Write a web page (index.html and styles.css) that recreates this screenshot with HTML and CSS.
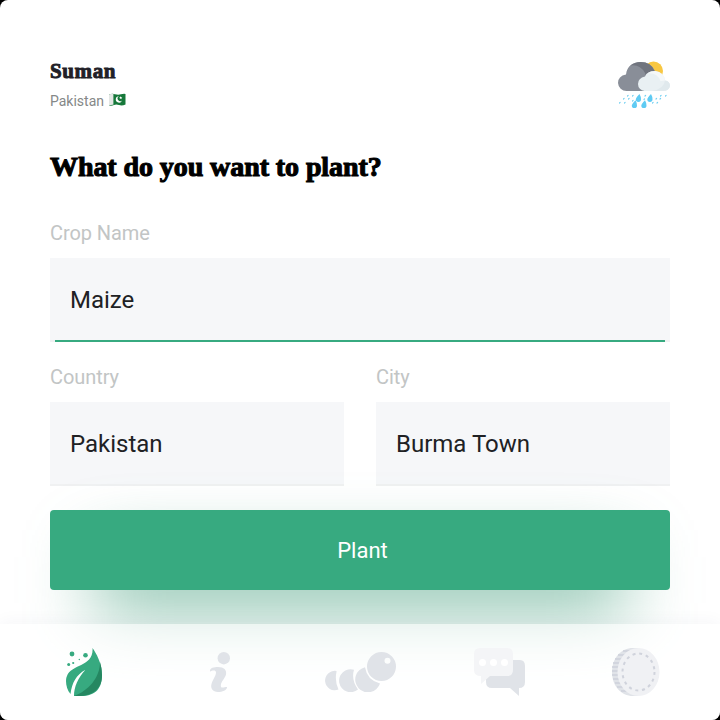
FILE: index.html
```html
<!DOCTYPE html>
<html lang="en">
<head>
<meta charset="utf-8">
<title>Plant</title>
<link rel="stylesheet" href="styles.css">
</head>
<body>
<div class="screen">
  <main class="content">
    <header class="header">
      <div>
        <div class="name">Suman</div>
        <div class="place">Pakistan
          <svg class="flag" width="17" height="14" viewBox="0 0 17 14"><path d="M0 1.7Q3 .3 6 1.2T12 1.3T16.500 1V11.500Q13 13 10 12T5 12T0 12.500Z" fill="#16783a"/><path d="M0 1.700Q2 .6 4.400 .9V11.800Q2 11.700 0 12.500Z" fill="#e4e7e5"/><path d="M10 3.200A3.200 3.200 0 1 0 13 7.400A2.600 2.600 0 1 1 10 3.200Z" fill="#fff"/><path d="M11.700 3.200l.5 1 1.100.1-.8.8.2 1.100-1-.6-1 .6.3-1.200-.8-.8 1.100-.1z" fill="#fff"/></svg>
        </div>
      </div>
      <svg class="weather" width="52" height="48" viewBox="0 0 52 48">
        <circle cx="35.500" cy="10" r="9.500" fill="#f8c742"/>
        <path d="M8.500 30A8.500 8.500 0 0 1 0 22Q0 15 8 13.500C9 5 15 1 22.500 1Q33 1 37 10L40 30Z" fill="#898e98"/>
        <path d="M12.500 4.500Q17 1 22.500 1Q33 1 36.500 10L29 17L27 12Q22 3 12.500 4.500Z" fill="#70747e"/>
        <path d="M26.500 30A7 7 0 0 1 20 23Q20 17 27 15.500Q29 10 37 10Q46 11 47 19.500Q52 20 52 25Q51 30 45 30Z" fill="#e9f0f3"/>
        <path d="M29 12.500Q32 10 37 10Q46 11 47 19.500L42.500 20Q39 11 29 12.500Z" fill="#f5f8f9"/>
        <path d="M47 19.500Q52 20 52 25Q51 30 45 30H34Q46 28 47 19.500Z" fill="#e0e9ed"/>
        <g fill="#5fcbf3">
          <path id="drop" d="M21.500 33Q17.800 37 17.800 38.300A2.600 2.600 0 0 0 23 38.300Q23.200 36 21.500 33Z"/>
          <use href="#drop" x="11.500"/><use href="#drop" x="-4" y="6.200"/><use href="#drop" x="5.500" y="6.200"/>
        </g>
        <g class="drizzle"><path d="M9.500 35l.6-.6M14.500 35l.6-.6M5.500 38l.6-.6M10.500 38l.6-.6M1.500 42l.6-.6M6.500 42l.6-.6M14.500 40l.6-.6M27 35l.6-.6M26 38.500l.6-.6M38 38l.6-.6M42.500 35l.6-.6M47.500 35l.6-.6M42 38l.6-.6M34.500 42l.6-.6M39 42l.6-.6"/></g>
      </svg>
    </header>
    <h1 class="title">What do you want to plant?</h1>
    <div class="field">
      <div class="label">Crop Name</div>
      <div class="input active">Maize</div>
    </div>
    <div class="row">
      <div class="field"><div class="label">Country</div><div class="input">Pakistan</div></div>
      <div class="field"><div class="label">City</div><div class="input">Burma Town</div></div>
    </div>
    <div class="action"><button class="plant">Plant</button></div>
  </main>
  <nav class="nav">
    <div class="tab">
      <svg width="36" height="48" viewBox="0 0 36 48">
        <path d="M26.500 0C30 5 36 15 36 27C36 40 30 48 15 48H8C8 39 12 30 19.500 21.800C10 27 6 35 4.500 46C0 41-1 32 1 28C5 16 28 19 26.500 0Z" fill="#37aa80"/>
        <path d="M34 14Q36 20 36 27C36 41 27 48 12 48H8C22 43 34 30 34 14Z" fill="#258761"/>
        <g fill="#37aa80"><circle cx="6" cy="6" r="2.400"/><circle cx="19.500" cy="7.300" r="2.300"/><circle cx="13.300" cy="11.500" r=".7"/><circle cx="7.200" cy="15" r="1.100"/><circle cx="2.700" cy="16.400" r="1.500"/></g>
      </svg>
    </div>
    <div class="tab tab-info">
      <svg width="20" height="40" viewBox="0 0 20 40" fill="#e0e3e8"><circle cx="13.800" cy="6.200" r="6.200"/><path d="M0 18.500C0 16 4 15 8 15C14 15 17 18 16 22.500C15 26.500 11 29.500 10.800 33.500C10.700 37 14 35 17 35C17.500 38 12 40 8 40C2.500 40 .3 36 1.500 32C2.500 28 6 24 6 20.500C6 17.500 2 18.500 0 19.500Z"/></svg>
    </div>
    <div class="tab">
      <svg width="72" height="40" viewBox="0 0 72 40" fill="#e0e3e8">
        <path d="M12.500 20Q10.500 28.500 14.500 37.500A9.700 9.700 0 1 1 12.500 19Z"/>
        <path d="M30 17.800Q27 28 34 37.500A11.500 11.500 0 1 1 30 17.700Z"/>
        <path d="M41 15.200Q43 28 56 31.500A12.700 12.700 0 1 1 41 15.200Z"/>
        <path fill-rule="evenodd" d="M57.500 0A14.500 14.500 0 1 1 57.500 29A14.500 14.500 0 1 1 57.500 0ZM63.500 5.800A3 3 0 1 0 63.500 11.800A3 3 0 1 0 63.500 5.800Z"/>
      </svg>
    </div>
    <div class="tab tab-chat">
      <svg width="52" height="48" viewBox="0 0 52 48">
        <path d="M18 12H46Q51 12 51 18V34Q51 40 45 40V48L36 40H18Q12 40 12 34V27Z" fill="#e0e3e8"/>
        <path d="M6 0H33Q39 0 39 6V22Q39 28 33 28H16L7 36V28Q0 28 0 22V6Q0 0 6 0Z" fill="#f4f5f7"/>
        <g fill="#fff"><circle cx="8.500" cy="14.500" r="3.500"/><circle cx="19.500" cy="14.500" r="3.500"/><circle cx="30.500" cy="14.500" r="3.500"/></g>
      </svg>
    </div>
    <div class="tab">
      <svg width="48" height="48" viewBox="0 0 48 48">
        <path d="M21 0H27V48H21C9 48 0 38 0 24S9 0 21 0Z" fill="#e0e3e8"/>
        <path d="M0 19H9M0 23H9M0 27H9M1 31H10M3 35H11M5 39H13M9 43H16M1 15H10M3 11H11M6 7H13M11 3H18" fill="none" stroke="#cdd1da" stroke-width="1.600"/>
        <ellipse cx="26.500" cy="24" rx="21" ry="24" fill="#f0f1f4"/>
        <ellipse cx="26.500" cy="24" rx="16" ry="18.500" fill="none" stroke="#d0d3dc" stroke-width="2" stroke-dasharray="3 3.800"/>
      </svg>
    </div>
  </nav>
</div>
</body>
</html>
```
FILE: styles.css
```css
* { box-sizing: border-box; }
body { margin: 0; background: #000; font-family: Roboto, "Liberation Sans", sans-serif; }
.screen { width: 720px; height: 720px; background: #fff; border-radius: 8px; overflow: hidden; display: flex; flex-direction: column; }
.content { height: 624px; padding: 58px 50px 0; }
.header { height: 92px; display: flex; justify-content: space-between; }
.name { height: 26px; font: bold 21px/26px "Liberation Serif", serif; letter-spacing: .6px; color: #212027; -webkit-text-stroke: .9px #212027; }
.place { display: flex; align-items: center; gap: 4.500px; margin-top: 8px; font-size: 14px; line-height: 18px; color: #858888; }
.flag { margin-top: -2px; }
.weather { margin-top: 3px; overflow: visible; }
.drizzle { fill: none; stroke: #76d1f2; stroke-width: 1.2; stroke-linecap: round; }
.title { margin: 0; height: 71px; font: bold 28px/33px "Liberation Serif", serif; letter-spacing: -.08px; color: #000; -webkit-text-stroke: 1.1px #000; white-space: nowrap; }
.field { flex: 1; }
.label { height: 24px; margin-bottom: 13px; font-size: 20px; line-height: 24px; letter-spacing: -.08px; color: #c2c5c5; }
.input { position: relative; height: 84px; padding-left: 20px; background: #f6f7f9; border-bottom: 2px solid #f0f1f2; font-size: 24px; line-height: 84px; color: #202124; }
.active::after { content: ""; position: absolute; left: 5px; right: 5px; bottom: -2px; height: 2px; background: #37aa80; }
.row { display: flex; gap: 32px; margin-top: 23px; }
.action { position: relative; z-index: 0; margin-top: 24px; }
.action::before { content: ""; position: absolute; z-index: -1; top: 42px; left: 44px; right: 44px; height: 56px; background: rgba(55, 150, 115, .66); filter: blur(34px); }
.plant { display: block; width: 100%; height: 80px; border: 0; border-radius: 4px; background: #37aa80; color: #fff; font: 22px Roboto, sans-serif; padding: 0 0 0 5px; }
.nav { position: relative; z-index: 1; height: 96px; padding: 0 15px; display: grid; grid-template-columns: repeat(5, 1fr); align-items: center; background: rgba(255, 255, 255, .55); box-shadow: 0 -2px 16px rgba(50, 50, 90, .045); }
.tab { display: flex; justify-content: center; }
.tab-info { padding-right: 5px; }
.tab-chat { padding-left: 4px; }
```
